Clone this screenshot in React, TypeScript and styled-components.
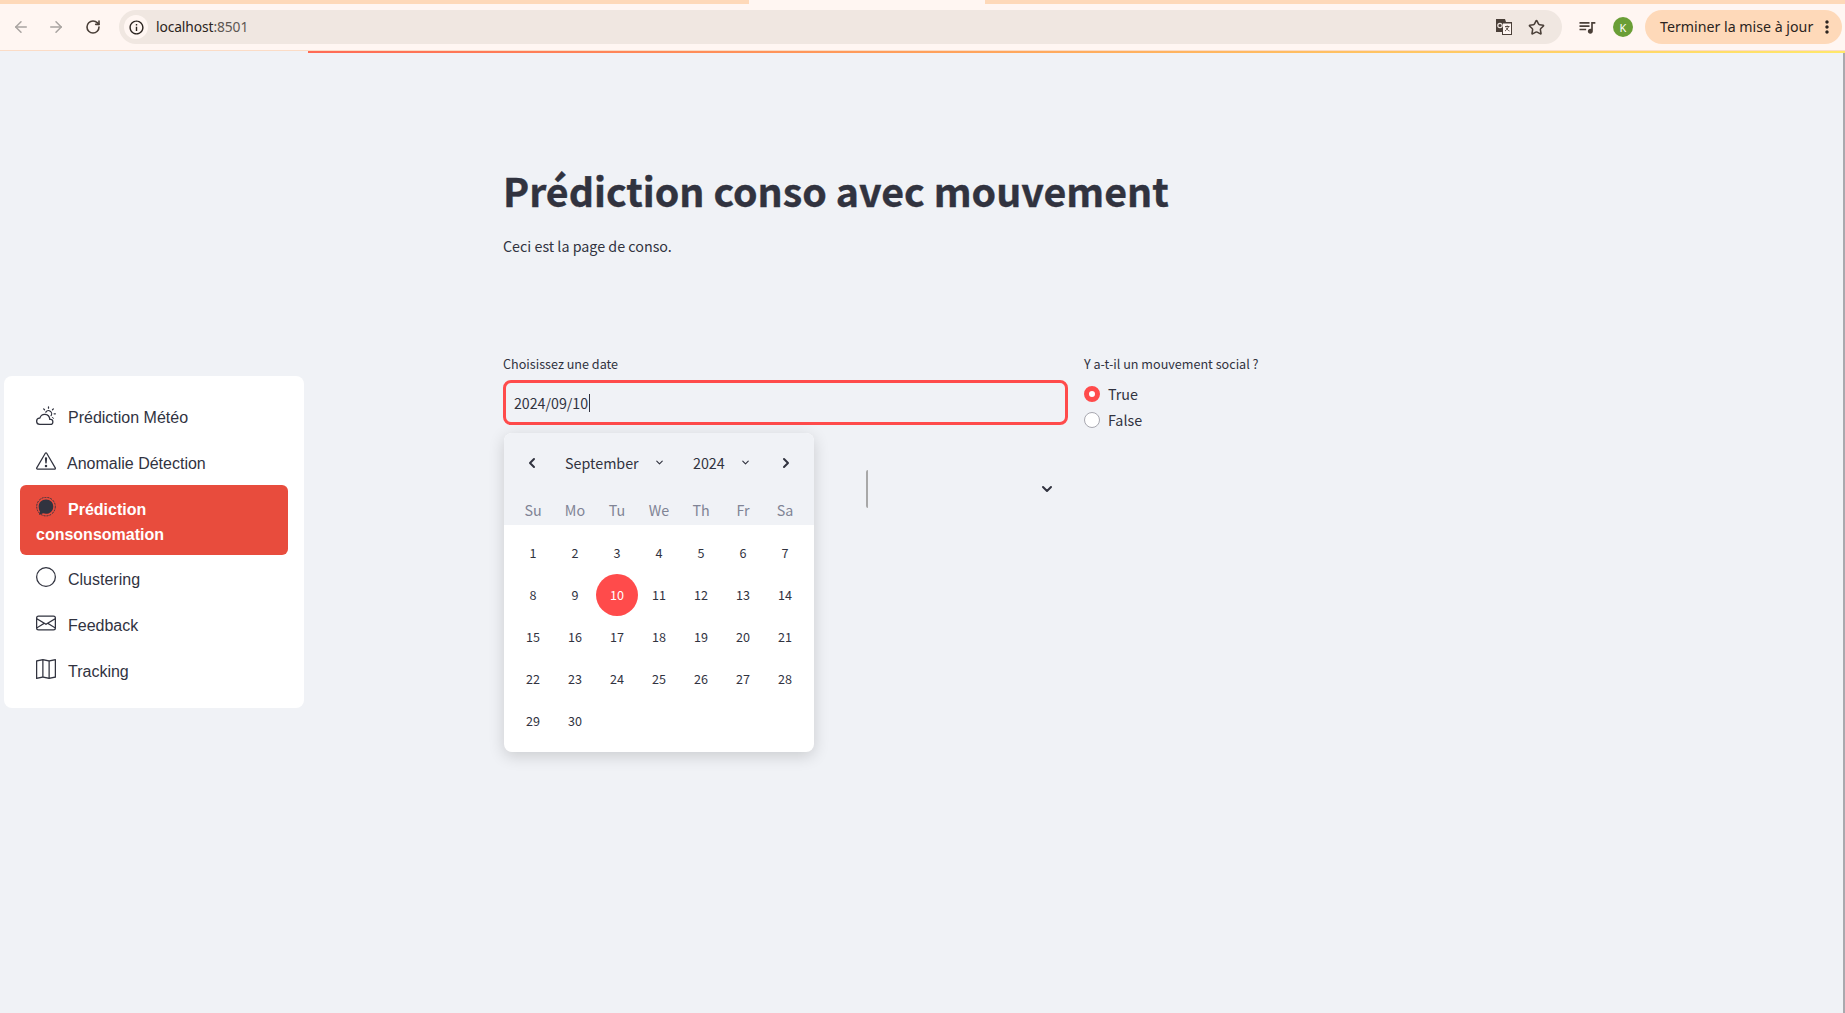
import { FC, ReactNode } from 'react';
import styled, { createGlobalStyle } from 'styled-components';
import { ArrowLeft, ArrowRight, RotateCw, Star, ChevronLeft, ChevronRight, ChevronDown } from 'lucide-react';
import { MdInfoOutline, MdQueueMusic, MdMoreVert } from 'react-icons/md';
import { BsCloudSun, BsExclamationTriangle, BsCircle, BsEnvelope, BsMap } from 'react-icons/bs';

const GlobalStyle = createGlobalStyle`
  html, body {
    margin: 0;
    padding: 0;
    height: 100%;
    overflow: hidden;
    background: #f0f2f6;
  }
  * { box-sizing: border-box; }
`;

const uiFont = `"Noto Sans CJK SC", "Noto Sans", sans-serif`;
const chromeFont = `"Noto Sans", "Open Sans", sans-serif`;

const Page = styled.div`
  width: 1845px;
  height: 1013px;
  display: flex;
  flex-flow: column nowrap;
  position: relative;
  overflow: hidden;
`;

/* browser chrome */
const TabStrip = styled.div`
  height: 4px;
  flex: none;
  display: flex;
  background: #fff6f2;
`;

const TabPiece = styled.div<{ $w: number }>`
  width: ${({ $w }) => $w}px;
  flex: ${({ $w }) => ($w ? 'none' : '1')};
  background: #fed9b9;
`;

const TabGap = styled.div`
  width: 236px;
  flex: none;
`;

const Toolbar = styled.div`
  height: 47px;
  flex: none;
  display: flex;
  align-items: center;
  background: #fff6f2;
  border-bottom: 1px solid #fbdcc6;
  padding: 0 3px 0 0;
  font-family: ${chromeFont};
  color: #2b2420;
`;

const NavBtn = styled.div<{ $off?: boolean; $ml: number }>`
  width: 20px;
  height: 20px;
  flex: none;
  margin-left: ${({ $ml }) => $ml}px;
  color: ${({ $off }) => ($off ? '#a9a4a1' : '#4a3f38')};
  display: flex;
  align-items: center;
  justify-content: center;
`;

const Omnibox = styled.div`
  flex: 1;
  height: 34px;
  margin-left: 16px;
  padding: 0 17px 0 5px;
  background: #f0e7e1;
  border-radius: 17px;
  display: flex;
  align-items: center;
`;

const SiteInfo = styled.div`
  width: 24px;
  height: 24px;
  flex: none;
  border-radius: 50%;
  background: #fff6f2;
  display: flex;
  align-items: center;
  justify-content: center;
`;

const Url = styled.div`
  flex: 1;
  margin-left: 8px;
  padding-bottom: 2px;
  font-size: 13.8px;
  letter-spacing: -0.1px;
  color: #2b2420;
`;

const Muted = styled.span`
  color: #5d5753;
`;

const BarIcon = styled.div<{ $ml: number }>`
  flex: none;
  margin-left: ${({ $ml }) => $ml}px;
  display: flex;
  align-items: center;
  color: #4a3f38;
`;

const Avatar = styled.div`
  width: 20px;
  height: 20px;
  flex: none;
  margin-left: 16px;
  border-radius: 50%;
  background: #6a9e36;
  color: #fff;
  font-size: 11px;
  display: flex;
  align-items: center;
  justify-content: center;
`;

const UpdateBtn = styled.div`
  width: 197px;
  height: 34px;
  flex: none;
  margin-left: 12px;
  padding: 0 5px 0 15px;
  background: #fed9b9;
  border-radius: 17px;
  font-size: 14.2px;
  display: flex;
  align-items: center;
  justify-content: space-between;
  white-space: nowrap;
`;

const UpdateText = styled.span`
  padding-bottom: 2px;
`;

const Decoration = styled.div`
  position: absolute;
  top: 51px;
  left: 308px;
  right: 0;
  height: 2px;
  background: linear-gradient(90deg, #ff6a55, #ff9a5a 35%, #ffe86a 100%);
`;

const ScrollThumb = styled.div`
  position: absolute;
  top: 53px;
  bottom: 0;
  right: 0;
  width: 2px;
  background: #a9a9ae;
`;

/* page */
const Body = styled.div`
  flex: 1;
  display: flex;
  background: #f0f2f6;
`;

const Sidebar = styled.aside`
  width: 308px;
  flex: none;
  padding: 325px 4px 0;
`;

const MenuCard = styled.nav`
  height: 332px;
  background: #fff;
  border-radius: 8px;
  padding: 17px 16px 0;
  font-family: "Liberation Sans", Arial, sans-serif;
  font-size: 16px;
  line-height: 25px;
  color: #31333f;
`;

const MenuItem = styled.div<{ $active?: boolean }>`
  padding: 12px 16px ${({ $active }) => ($active ? 8 : 9)}px;
  border-radius: 6px;
  background: ${({ $active }) => ($active ? '#e84c3d' : 'transparent')};
  color: ${({ $active }) => ($active ? '#fff' : '#31333f')};
  font-weight: ${({ $active }) => ($active ? 700 : 400)};
`;

const MenuIcon = styled.span<{ $mr: number }>`
  display: inline-block;
  width: 20px;
  height: 20px;
  margin-right: ${({ $mr }) => $mr}px;
  vertical-align: -2px;
  color: #31333f;
  font-size: 20px;
  line-height: 0;
`;

const Main = styled.main`
  width: 565px;
  flex: none;
  margin-left: 195px;
  padding-top: 111px;
  font-family: ${uiFont};
  color: #31333f;
`;

const Title = styled.h1`
  margin: 0;
  font-size: 39.3px;
  line-height: 56px;
  font-weight: 700;
  white-space: nowrap;
  -webkit-text-stroke: 0.4px #31333f;
`;

const Lead = styled.p`
  margin: 16px 0 0;
  font-size: 14.3px;
  line-height: 24px;
`;

const FieldLabel = styled.label`
  display: block;
  height: 21px;
  font-size: 12.6px;
  line-height: 21px;
  white-space: nowrap;
`;

const DateBlock = styled.div`
  margin-top: 95px;
  position: relative;
`;

const DateInput = styled.div`
  height: 45px;
  margin-top: 6px;
  padding: 0 8px;
  border: 3px solid #ff4b4b;
  border-radius: 8px;
  font-size: 14.2px;
  display: flex;
  align-items: center;
`;

const Caret = styled.span`
  display: inline-block;
  width: 1px;
  height: 18px;
  margin-left: 1px;
  background: #31333f;
`;

const HiddenSelect = styled.div`
  height: 38px;
  margin: 45px 0 0 363px;
  border-left: 2px solid #a8a8a8;
  border-radius: 2px;
  display: flex;
  align-items: center;
  justify-content: flex-end;
  padding-right: 13px;
`;

const RadioColumn = styled.div`
  width: 200px;
  flex: none;
  margin-left: 16px;
  padding-top: 302px;
  font-family: ${uiFont};
  color: #31333f;
`;

const RadioRow = styled.div<{ $first?: boolean }>`
  height: 26px;
  margin-top: ${({ $first }) => ($first ? '6px' : '0')};
  display: flex;
  align-items: center;
  font-size: 14.3px;
`;

const RadioDot = styled.span<{ $on?: boolean }>`
  width: 16px;
  height: 16px;
  flex: none;
  margin: 2px 8px 0 0;
  border-radius: 50%;
  background: #fff;
  border: ${({ $on }) => ($on ? '5px solid #ff4b4b' : '1px solid #a8a8b0')};
`;

/* calendar popover */
const Calendar = styled.div`
  position: absolute;
  top: 80px;
  left: 1px;
  width: 310px;
  height: 319px;
  border-radius: 8px;
  overflow: hidden;
  background: #fff;
  box-shadow: 0 4px 16px rgba(0, 0, 0, 0.16);
`;

const CalHead = styled.div`
  height: 92px;
  background: #f0f2f6;
  padding: 0 8px;
`;

const CalNav = styled.div`
  height: 60px;
  display: flex;
  align-items: center;
  font-size: 14.3px;
`;

const NavArrow = styled.div<{ $ml: number }>`
  margin-left: ${({ $ml }) => $ml}px;
  width: 16px;
  display: flex;
  justify-content: center;
  color: #31333f;
`;

const Picker = styled.div<{ $w: number; $ml: number }>`
  width: ${({ $w }) => $w}px;
  margin-left: ${({ $ml }) => $ml}px;
  padding-bottom: 1px;
  flex: none;
  display: flex;
  align-items: center;
  justify-content: space-between;
`;

const CalRow = styled.div`
  display: grid;
  grid-template-columns: repeat(7, 42px);
`;

const Weekday = styled.div`
  height: 32px;
  font-size: 14.3px;
  color: #808495;
  display: flex;
  align-items: center;
  justify-content: center;
`;

const CalBody = styled.div`
  padding: 7px 8px 0;
`;

const Day = styled.div<{ $on?: boolean }>`
  height: 42px;
  padding-bottom: 2px;
  font-size: 12.6px;
  border-radius: 50%;
  display: flex;
  align-items: center;
  justify-content: center;
  color: ${({ $on }) => ($on ? '#fff' : '#31333f')};
  background: ${({ $on }) => ($on ? '#ff4b4b' : 'transparent')};
`;

const SpeechIcon: FC = () => (
  <svg width="20" height="20" viewBox="0 0 20 20">
    <circle cx="10" cy="9.6" r="9.3" fill="none" stroke="#31333f" strokeWidth="1" strokeDasharray="2 1" />
    <path d="M10 2.4c4.3 0 7.3 3 7.3 7.2s-3 7.2-7.3 7.2c-1 0-2-.2-2.9-.5L3 18l1-3.2C3.100 13.400 2.700 11.600 2.700 9.600 2.700 5.400 5.700 2.400 10 2.400z" fill="#31333f" />
  </svg>
);

const TranslateIcon: FC = () => (
  <svg width="18" height="18" viewBox="0 0 18 18">
    <path d="M1 1h9l1 3h6v13H7.500L7 14H1z" fill="#4a3f38" />
    <rect x="7.500" y="5" width="9" height="11.500" fill="#fff6f2" stroke="#4a3f38" strokeWidth="1" />
    <circle cx="5" cy="7.500" r="2.200" fill="none" stroke="#f0e7e1" strokeWidth="1.200" />
    <path d="M10 8.500h4.500M12.200 7.500v1M13.500 8.500c-.5 2-2 3.500-3.500 4.500M11 9.500c.6 1.500 2 3 3.500 3.500" fill="none" stroke="#4a3f38" strokeWidth="0.900" />
  </svg>
);

const menu: { label: ReactNode; icon: ReactNode; mr: number; active?: boolean }[] = [
  { label: 'Prédiction Météo', icon: <BsCloudSun />, mr: 12 },
  { label: 'Anomalie Détection', icon: <BsExclamationTriangle />, mr: 11 },
  { label: 'Prédiction consonsomation', icon: <SpeechIcon />, mr: 12, active: true },
  { label: 'Clustering', icon: <BsCircle />, mr: 12 },
  { label: 'Feedback', icon: <BsEnvelope />, mr: 12 },
  { label: 'Tracking', icon: <BsMap />, mr: 12 },
];

const weekdays = ['Su', 'Mo', 'Tu', 'We', 'Th', 'Fr', 'Sa'];
const days = Array.from({ length: 30 }, (_, i) => i + 1);

const App: FC = () => {
  return (
    <Page>
      <GlobalStyle />
      <TabStrip>
        <TabPiece $w={749} />
        <TabGap />
        <TabPiece $w={0} />
      </TabStrip>
      <Toolbar>
        <NavBtn $off $ml={11}><ArrowLeft size={18} /></NavBtn>
        <NavBtn $off $ml={15}><ArrowRight size={18} /></NavBtn>
        <NavBtn $ml={17}><RotateCw size={16} strokeWidth={2.4} /></NavBtn>
        <Omnibox>
          <SiteInfo><MdInfoOutline size={17} color="#2b2420" /></SiteInfo>
          <Url>localhost<Muted>:8501</Muted></Url>
          <BarIcon $ml={0}><TranslateIcon /></BarIcon>
          <BarIcon $ml={15}><Star size={17} strokeWidth={2.2} /></BarIcon>
        </Omnibox>
        <BarIcon $ml={15}><MdQueueMusic size={20} /></BarIcon>
        <Avatar>K</Avatar>
        <UpdateBtn>
          <UpdateText>Terminer la mise à jour</UpdateText>
          <MdMoreVert size={20} />
        </UpdateBtn>
      </Toolbar>
      <Decoration />
      <ScrollThumb />
      <Body>
        <Sidebar>
          <MenuCard>
            {menu.map((item, i) => (
              <MenuItem key={i} $active={item.active}>
                <MenuIcon $mr={item.mr}>{item.icon}</MenuIcon>
                {item.label}
              </MenuItem>
            ))}
          </MenuCard>
        </Sidebar>
        <Main>
          <Title>Prédiction conso avec mouvement</Title>
          <Lead>Ceci est la page de conso.</Lead>
          <DateBlock>
            <FieldLabel>Choisissez une date</FieldLabel>
            <DateInput>2024/09/10<Caret /></DateInput>
            <HiddenSelect><ChevronDown size={16} strokeWidth={3} /></HiddenSelect>
            <Calendar>
              <CalHead>
                <CalNav>
                  <NavArrow $ml={12}><ChevronLeft size={16} strokeWidth={3} /></NavArrow>
                  <Picker $w={100} $ml={25}>September<ChevronDown size={11} strokeWidth={2.5} /></Picker>
                  <Picker $w={58} $ml={28}>2024<ChevronDown size={11} strokeWidth={2.5} /></Picker>
                  <NavArrow $ml={27}><ChevronRight size={16} strokeWidth={3} /></NavArrow>
                </CalNav>
                <CalRow>
                  {weekdays.map((d) => <Weekday key={d}>{d}</Weekday>)}
                </CalRow>
              </CalHead>
              <CalBody>
                <CalRow>
                  {days.map((d) => <Day key={d} $on={d === 10}>{d}</Day>)}
                </CalRow>
              </CalBody>
            </Calendar>
          </DateBlock>
        </Main>
        <RadioColumn>
          <FieldLabel>Y a-t-il un mouvement social ?</FieldLabel>
          <RadioRow $first><RadioDot $on />True</RadioRow>
          <RadioRow><RadioDot />False</RadioRow>
        </RadioColumn>
      </Body>
    </Page>
  );
};

export default App;
